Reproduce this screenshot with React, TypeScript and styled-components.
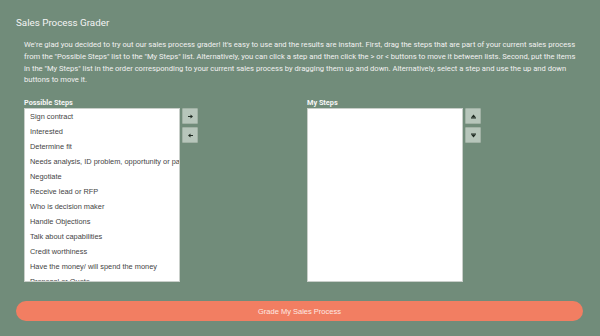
import React from 'react';
import styled, { createGlobalStyle } from 'styled-components';

const GlobalStyle = createGlobalStyle`
  html, body {
    margin: 0;
    padding: 0;
    background: #718c7a;
  }
  body {
    font-family: Roboto, "Liberation Sans", sans-serif;
  }
`;

const Page = styled.div`
  width: 600px;
  height: 336px;
  overflow: hidden;
  background: #718c7a;
  display: flex;
  flex-direction: column;
`;

const Title = styled.h1`
  margin: 16px 0 0 16px;
  font-size: 9.8px;
  line-height: 14px;
  font-weight: 400;
  color: #f4f4f4;
`;

const Intro = styled.p`
  margin: 9px 0 0 24px;
  width: 552px;
  font-size: 7.6px;
  line-height: 11.8px;
  color: #f1f1f1;
`;

const Columns = styled.div`
  display: grid;
  grid-template-columns: 283px 283px;
  margin: 12px 0 0 24px;
`;

const Column = styled.div`
  display: flex;
  flex-direction: column;
`;

const Label = styled.div`
  font-size: 7.3px;
  line-height: 10px;
  font-weight: 700;
  color: #f6f6f6;
`;

const Row = styled.div`
  display: flex;
  gap: 2px;
`;

const ListBox = styled.ul`
  margin: 0;
  padding: 0;
  list-style: none;
  width: 154px;
  height: 172px;
  background: #fff;
  border: 1px solid #c9cfca;
  overflow: hidden;
`;

const Item = styled.li`
  height: 15px;
  line-height: 15px;
  padding-left: 5px;
  white-space: nowrap;
  font-family: "Liberation Sans", Arial, sans-serif;
  font-size: 7.4px;
  color: #444;
`;

const Buttons = styled.div`
  display: flex;
  flex-direction: column;
  gap: 3px;
`;

const SmallButton = styled.button`
  width: 16px;
  height: 16px;
  padding: 0;
  display: flex;
  align-items: center;
  justify-content: center;
  background: #b7c6bb;
  border: 1px solid #a1b2a5;
  border-radius: 1px;
`;

const GradeButton = styled.button`
  margin: 19px 0 0 16px;
  width: 567px;
  height: 20px;
  border: none;
  border-radius: 10px;
  background: #f27e62;
  color: #fde9e2;
  font-family: "Liberation Sans", Arial, sans-serif;
  font-size: 7.5px;
`;

const Arrow = ({ dir }: { dir: 'left' | 'right' | 'up' | 'down' }) => {
  if (dir === 'up' || dir === 'down') {
    return (
      <svg width="7" height="7" viewBox="0 0 7 7" style={{ transform: `rotate(${dir === 'up' ? 0 : 180}deg)` }}>
        <path d="M3.5 1.5 L6 4.5 H1 Z" fill="#1e2a22" />
        <rect x="1" y="4.5" width="5" height="1" fill="#1e2a22" />
      </svg>
    );
  }
  return (
    <svg width="7" height="7" viewBox="0 0 7 7" style={{ transform: `rotate(${dir === 'right' ? 0 : 180}deg)` }}>
      <path d="M1 3.5 H5" stroke="#1e2a22" strokeWidth="1" />
      <path d="M3.5 1.5 L6 3.5 L3.5 5.5 Z" fill="#1e2a22" />
    </svg>
  );
};

const possible = [
  'Sign contract',
  'Interested',
  'Determine fit',
  'Needs analysis, ID problem, opportunity or pain',
  'Negotiate',
  'Receive lead or RFP',
  'Who is decision maker',
  'Handle Objections',
  'Talk about capabilities',
  'Credit worthiness',
  'Have the money/ will spend the money',
  'Proposal or Quote',
];

export default function App() {
  return (
    <Page>
      <GlobalStyle />
      <Title>Sales Process Grader</Title>
      <Intro>
        We're glad you decided to try out our sales process grader! It's easy to use and the results are instant. First,
        drag the steps that are part of your current sales process from the "Possible Steps" list to the "My Steps" list.
        Alternatively, you can click a step and then click the &gt; or &lt; buttons to move it between lists. Second, put
        the items in the "My Steps" list in the order corresponding to your current sales process by dragging them up and
        down. Alternatively, select a step and use the up and down buttons to move it.
      </Intro>
      <Columns>
        <Column>
          <Label>Possible Steps</Label>
          <Row>
            <ListBox>
              {possible.map((p) => (
                <Item key={p}>{p}</Item>
              ))}
            </ListBox>
            <Buttons>
              <SmallButton><Arrow dir="right" /></SmallButton>
              <SmallButton><Arrow dir="left" /></SmallButton>
            </Buttons>
          </Row>
        </Column>
        <Column>
          <Label>My Steps</Label>
          <Row>
            <ListBox />
            <Buttons>
              <SmallButton><Arrow dir="up" /></SmallButton>
              <SmallButton><Arrow dir="down" /></SmallButton>
            </Buttons>
          </Row>
        </Column>
      </Columns>
      <GradeButton>Grade My Sales Process</GradeButton>
    </Page>
  );
}
